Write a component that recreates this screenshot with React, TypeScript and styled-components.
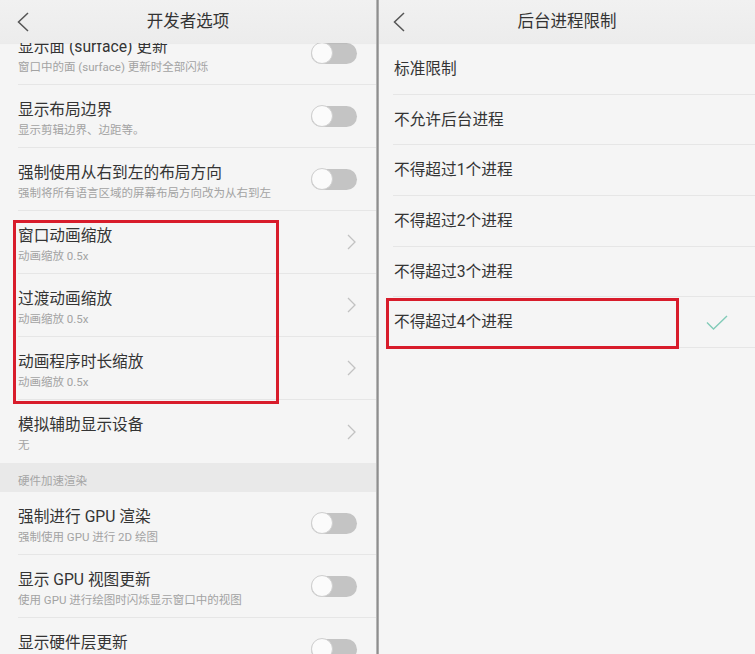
import React from "react";
import styled, { createGlobalStyle } from "styled-components";

const GlobalStyle = createGlobalStyle`
  html, body { margin: 0; padding: 0; background: #f5f5f5; }
  body {
    font-family: Roboto, "Noto Sans CJK SC", "Noto Sans", sans-serif;
    color: #333;
    -webkit-font-smoothing: antialiased;
  }
  * { box-sizing: border-box; }
`;

const Screen = styled.div`
  display: flex;
  width: 755px;
  height: 654px;
  overflow: hidden;
  background: #f5f5f5;
`;

const Panel = styled.section`
  position: relative;
  width: 376px;
  flex: 0 0 376px;
  display: flex;
  flex-direction: column;
  background: #f5f5f5;
  overflow: hidden;
`;

const Splitter = styled.div`
  flex: 0 0 3px;
  background: linear-gradient(to right, #c9c9c9 0%, #8e8e8e 50%, #b9b9b9 100%);
`;

const Header = styled.header`
  position: relative;
  z-index: 2;
  flex: 0 0 43px;
  display: grid;
  grid-template-columns: 44px 1fr 44px;
  align-items: center;
  background: linear-gradient(to bottom, #f1f1f1, #ececec);
  box-shadow: 0 1px 1px rgba(0, 0, 0, 0.04);
`;

const BackButton = styled.div<{ $left: number }>`
  display: flex;
  align-items: center;
  padding-left: ${(p) => p.$left}px;
  height: 100%;
`;

const Title = styled.h1`
  margin: 0;
  text-align: center;
  font-size: 16.5px;
  font-weight: 400;
  color: #333;
  line-height: 22px;
`;

const Body = styled.div`
  position: relative;
  flex: 1;
  overflow: hidden;
`;

const List = styled.div<{ $offset?: number }>`
  margin-top: ${(p) => p.$offset ?? 0}px;
`;

const Row = styled.div<{ $h: number; $pl: number }>`
  height: ${(p) => p.$h}px;
  padding-left: ${(p) => p.$pl}px;
  display: flex;
`;

const RowInner = styled.div<{ $pr: number }>`
  flex: 1;
  display: flex;
  align-items: center;
  justify-content: space-between;
  padding-right: ${(p) => p.$pr}px;
  border-bottom: 1px solid #e6e6e6;
`;

const TextBlock = styled.div`
  align-self: flex-start;
  padding-top: 15px;
  display: flex;
  flex-direction: column;
`;

const ItemTitle = styled.div`
  font-size: 15.7px;
  line-height: 20px;
  color: #343434;
  white-space: nowrap;
`;

const ItemSub = styled.div`
  margin-top: 1.5px;
  font-size: 11.5px;
  line-height: 16px;
  color: #a3a3a3;
  white-space: nowrap;
`;

const OptionText = styled.div`
  font-size: 15.7px;
  line-height: 20px;
  color: #343434;
  white-space: nowrap;
`;

const Section = styled.div`
  height: 29px;
  padding: 11px 0 0 18px;
  background: #e9e9e9;
  font-size: 11.5px;
  line-height: 14px;
  color: #a5a5a5;
`;

const Track = styled.div`
  position: relative;
  width: 46px;
  height: 21px;
  border-radius: 11px;
  background: #c4c4c4;
  flex: 0 0 auto;
`;

const Knob = styled.div`
  position: absolute;
  left: 0;
  top: -0.5px;
  width: 22px;
  height: 22px;
  border-radius: 50%;
  background: #fbfbfb;
  border: 1px solid #d0d0d0;
`;

const Highlight = styled.div<{ $x: number; $y: number; $w: number; $h: number }>`
  position: absolute;
  left: ${(p) => p.$x}px;
  top: ${(p) => p.$y}px;
  width: ${(p) => p.$w}px;
  height: ${(p) => p.$h}px;
  border: 3px solid #d81c2b;
  pointer-events: none;
  z-index: 3;
`;

const Toggle = () => (
  <Track>
    <Knob />
  </Track>
);

const Chevron = () => (
  <svg width="9" height="16" viewBox="0 0 9 16" style={{ marginRight: 1 }}>
    <path d="M1 1 L8 8 L1 15" fill="none" stroke="#c2c2c2" strokeWidth="1.3" />
  </svg>
);

const BackIcon = () => (
  <svg width="12" height="20" viewBox="0 0 12 20">
    <path d="M11 1 L1.5 10 L11 19" fill="none" stroke="#555" strokeWidth="1.5" />
  </svg>
);

const Check = () => (
  <svg width="22" height="15" viewBox="0 0 22 15">
    <path d="M1 7.5 L7.5 14 L21 1" fill="none" stroke="#82cbb8" strokeWidth="1.4" />
  </svg>
);

type Item = { title: string; sub: string; kind: "toggle" | "arrow" };

const group1: Item[] = [
  { title: "显示面 (surface) 更新", sub: "窗口中的面 (surface) 更新时全部闪烁", kind: "toggle" },
  { title: "显示布局边界", sub: "显示剪辑边界、边距等。", kind: "toggle" },
  { title: "强制使用从右到左的布局方向", sub: "强制将所有语言区域的屏幕布局方向改为从右到左", kind: "toggle" },
  { title: "窗口动画缩放", sub: "动画缩放 0.5x", kind: "arrow" },
  { title: "过渡动画缩放", sub: "动画缩放 0.5x", kind: "arrow" },
  { title: "动画程序时长缩放", sub: "动画缩放 0.5x", kind: "arrow" },
  { title: "模拟辅助显示设备", sub: "无", kind: "arrow" },
];

const group2: Item[] = [
  { title: "强制进行 GPU 渲染", sub: "强制使用 GPU 进行 2D 绘图", kind: "toggle" },
  { title: "显示 GPU 视图更新", sub: "使用 GPU 进行绘图时闪烁显示窗口中的视图", kind: "toggle" },
  { title: "显示硬件层更新", sub: "Flash hardware layers green when they update", kind: "toggle" },
];

const options = [
  "标准限制",
  "不允许后台进程",
  "不得超过1个进程",
  "不得超过2个进程",
  "不得超过3个进程",
  "不得超过4个进程",
];

const SettingRow = ({ item, last }: { item: Item; last?: boolean }) => (
  <Row $h={63} $pl={18}>
    <RowInner $pr={item.kind === "toggle" ? 19 : 19} style={last ? { borderBottom: "none" } : undefined}>
      <TextBlock>
        <ItemTitle>{item.title}</ItemTitle>
        <ItemSub>{item.sub}</ItemSub>
      </TextBlock>
      {item.kind === "toggle" ? <Toggle /> : <Chevron />}
    </RowInner>
  </Row>
);

export default function App() {
  return (
    <>
      <GlobalStyle />
      <Screen>
        <Panel>
          <Header>
            <BackButton $left={17}>
              <BackIcon />
            </BackButton>
            <Title>开发者选项</Title>
            <span />
          </Header>
          <Body>
            <List $offset={-21}>
              {group1.map((it) => (
                <SettingRow key={it.title} item={it} last={it.title === "模拟辅助显示设备"} />
              ))}
              <Section>硬件加速渲染</Section>
              {group2.map((it) => (
                <SettingRow key={it.title} item={it} />
              ))}
            </List>
          </Body>
          <Highlight $x={13} $y={220} $w={266} $h={184} />
        </Panel>
        <Splitter />
        <Panel>
          <Header>
            <BackButton $left={14}>
              <BackIcon />
            </BackButton>
            <Title>后台进程限制</Title>
            <span />
          </Header>
          <Body>
            <List $offset={1}>
              {options.map((o, i) => (
                <Row key={o} $h={50.7} $pl={14}>
                  <RowInner $pr={27}>
                    <OptionText style={{ marginLeft: 1 }}>{o}</OptionText>
                    {i === options.length - 1 ? <Check /> : null}
                  </RowInner>
                </Row>
              ))}
            </List>
          </Body>
          <Highlight $x={7} $y={298} $w={293} $h={51} />
        </Panel>
      </Screen>
    </>
  );
}
